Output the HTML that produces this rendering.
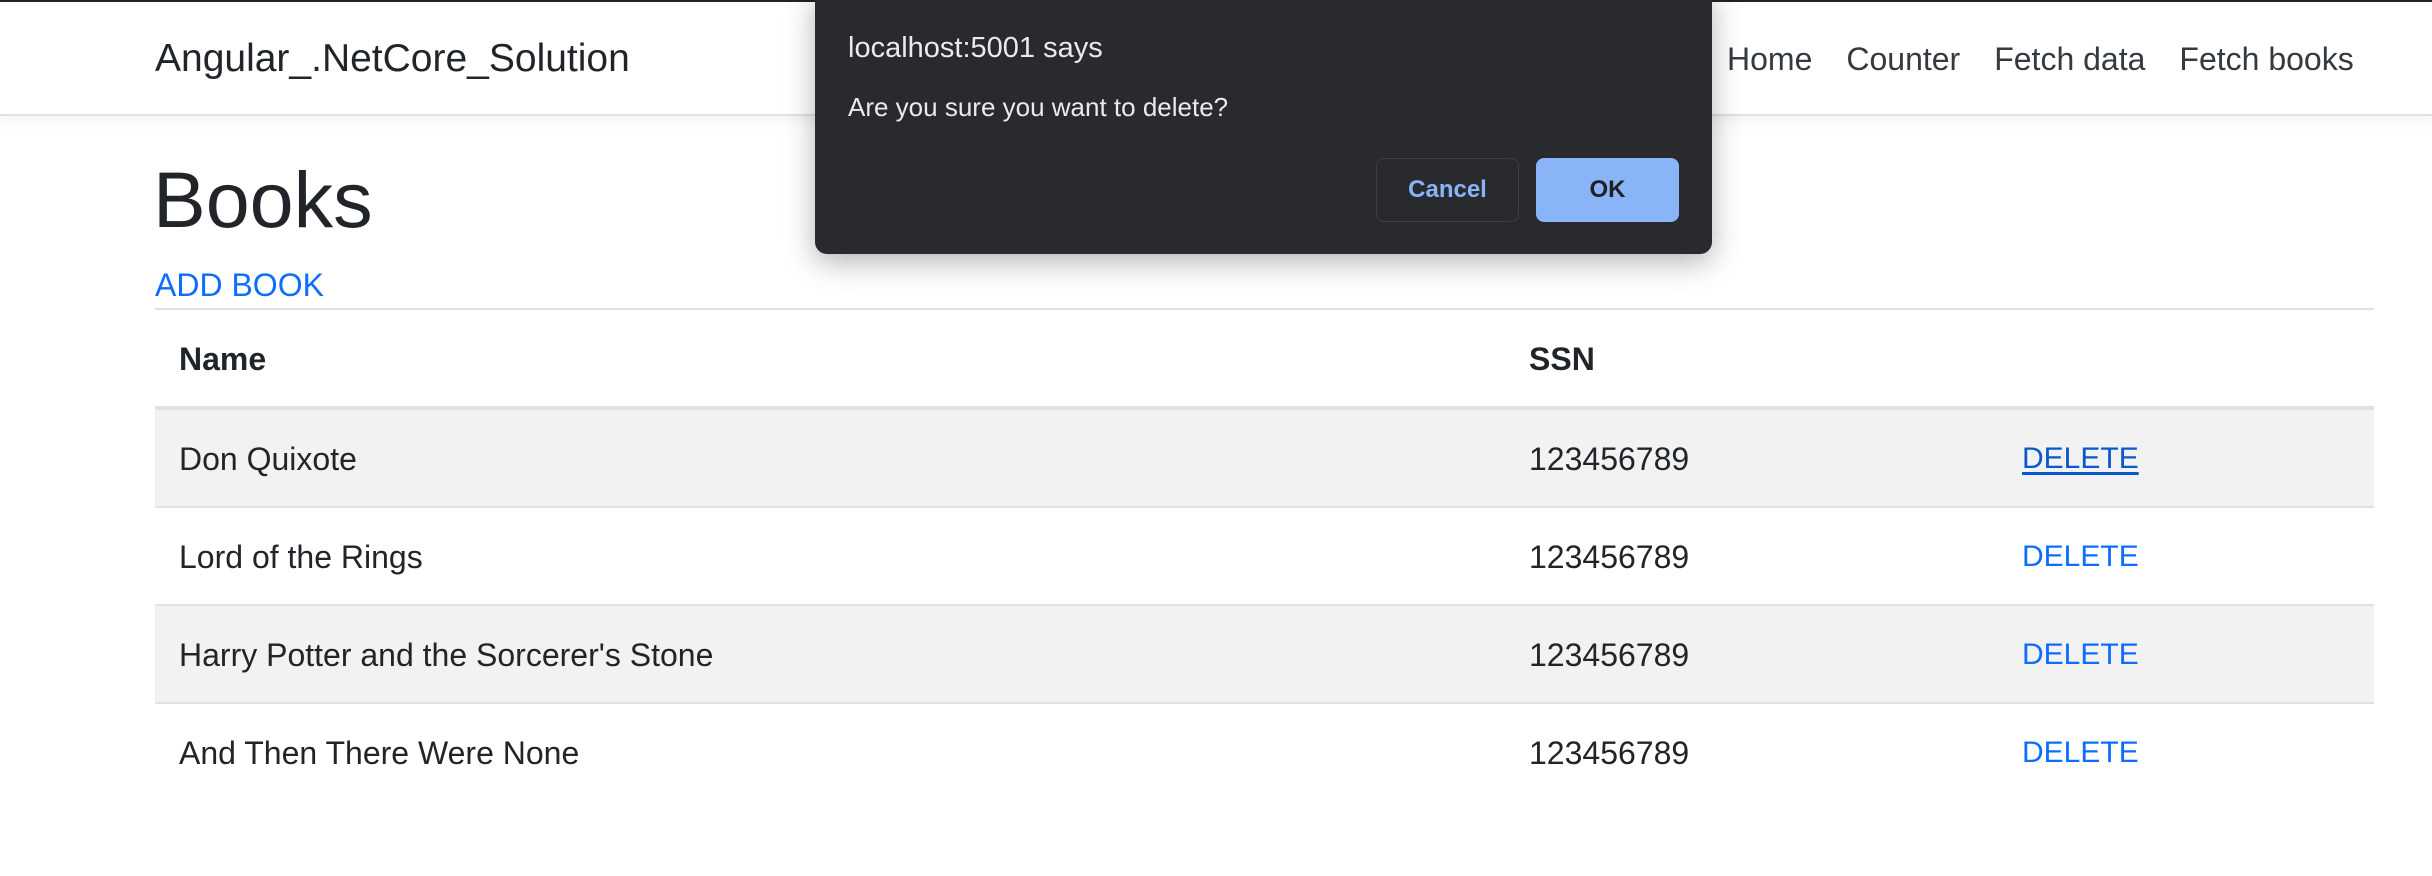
<!DOCTYPE html>
<html><head><meta charset="utf-8"><style>
*{box-sizing:border-box;margin:0;padding:0}
body{width:2432px;height:876px;overflow:hidden;background:#fff;font-family:"Liberation Sans",sans-serif;color:#212529;position:relative}
.topline{position:absolute;left:0;top:0;width:2432px;height:2px;background:#222}
.nav{position:absolute;left:0;top:2px;width:2432px;height:114px;border-bottom:2px solid #dee2e6;box-shadow:0 4px 14px rgba(0,0,0,.06)}
.brand{position:absolute;left:155px;top:33px;font-size:39px;line-height:48px;color:#212529}
.links{position:absolute;top:37px;left:1727px;font-size:32px;line-height:40px;color:#343a40;white-space:nowrap}
.links span{margin-right:34px}
h1{position:absolute;left:153px;top:152px;font-size:79px;font-weight:500;line-height:96px}
.add{position:absolute;left:155px;top:265px;font-size:32px;line-height:40px;color:#0d6efd}
.tbl{position:absolute;left:155px;top:308px;width:2219px;border-top:2px solid #dee2e6}
.row{position:relative;height:98px;border-bottom:2px solid #dee2e6;font-size:32px}
.row.h{height:100px;border-bottom:4px solid #dee2e6;font-weight:bold}
.row.g{background:#f2f2f2}
.row div{position:absolute;top:0;line-height:98px}
.c1{left:24px}.c2{left:1374px}.c3{left:1867px;color:#0d6efd;font-size:30px}
.u{text-decoration:underline;color:#0a58ca!important;text-underline-offset:4px}
.dlg{position:absolute;left:815px;top:-12px;width:897px;height:266px;background:#292a2d;border-radius:12px;box-shadow:0 8px 30px rgba(0,0,0,.3)}
.t{position:absolute;left:33px;top:44px;font-size:29px;color:#e8eaed}
.m{position:absolute;left:33px;top:104px;font-size:26px;color:#e8eaed}
.b{position:absolute;top:170px;height:64px;border-radius:8px;font-size:24px;font-weight:bold;line-height:64px;text-align:center}
.cancel{left:561px;width:143px;border:1.5px solid #3c4043;color:#8ab4f8;line-height:61px}
.ok{left:721px;width:143px;background:#8ab4f8;color:#202124}
</style></head><body>
<div class="topline"></div>
<div class="nav"><div class="brand">Angular_.NetCore_Solution</div>
<div class="links"><span>Home</span><span>Counter</span><span>Fetch data</span><span>Fetch books</span></div></div>
<h1>Books</h1>
<div class="add">ADD BOOK</div>
<div class="tbl">
<div class="row h"><div class="c1">Name</div><div class="c2">SSN</div></div>
<div class="row g"><div class="c1">Don Quixote</div><div class="c2">123456789</div><div class="c3 u">DELETE</div></div>
<div class="row"><div class="c1">Lord of the Rings</div><div class="c2">123456789</div><div class="c3">DELETE</div></div>
<div class="row g"><div class="c1">Harry Potter and the Sorcerer's Stone</div><div class="c2">123456789</div><div class="c3">DELETE</div></div>
<div class="row" style="border-bottom:none"><div class="c1">And Then There Were None</div><div class="c2">123456789</div><div class="c3">DELETE</div></div>
</div>
<div class="dlg"><div class="t">localhost:5001 says</div><div class="m">Are you sure you want to delete?</div>
<div class="b cancel">Cancel</div><div class="b ok">OK</div></div>
</body></html>
